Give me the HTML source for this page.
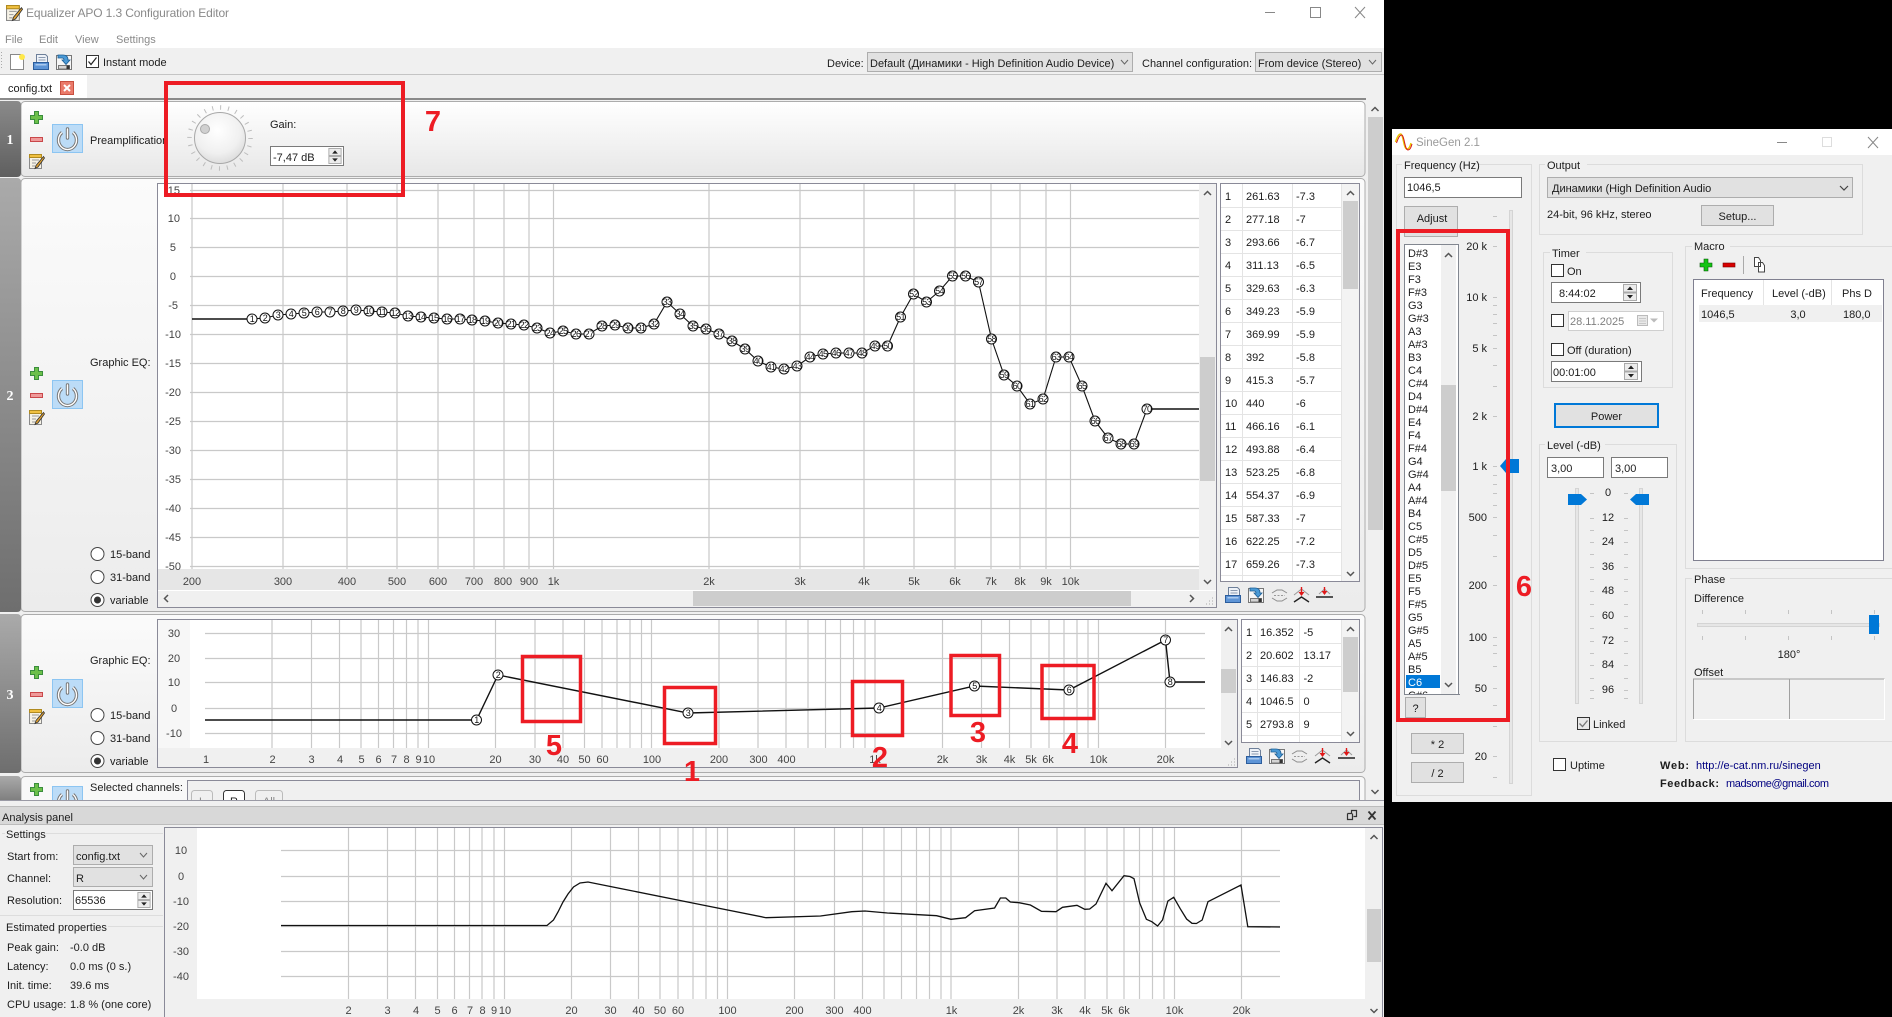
<!DOCTYPE html>
<html><head><meta charset="utf-8"><title>Equalizer APO</title>
<style>
html,body{margin:0;padding:0;background:#000;width:1892px;height:1017px;overflow:hidden}
svg{display:block}
text{font-family:"Liberation Sans","Noto Sans CJK JP",sans-serif;font-size:11px;fill:#1c1c1c}
.m{text-anchor:middle}.e{text-anchor:end}
.gy text{fill:#444}
.ch{fill:none;stroke:#555;stroke-width:1.5}
.th{fill:none;stroke:#666;stroke-width:1}
.grid{fill:none;stroke:#c9c9c9;stroke-width:1.2}
.curve{fill:none;stroke:#111;stroke-width:1.1}
.pt circle{fill:#fff;stroke:#111;stroke-width:1}
.pt text{font-size:9px;text-anchor:middle;letter-spacing:-.6px;fill:#111}
.rb{fill:none;stroke:#ed1c24;stroke-width:4}
.rn{font-size:29px;font-weight:bold;fill:#ed1c24;text-anchor:middle}
.sg{fill:none;stroke:#dcdcdc;stroke-width:1}
.ln{stroke:#e2e2e2;stroke-width:1}
.tk{stroke:#c4c4c4;stroke-width:1}
.btn{fill:#e1e1e1;stroke:#adadad}
.inp{fill:#fff;stroke:#7a7a7a}
.cb{fill:#fff;stroke:#333}
</style></head><body>
<svg width="1892" height="1017" viewBox="0 0 1892 1017" xmlns="http://www.w3.org/2000/svg">
<defs>
<linearGradient id="pg" x1="0" y1="0" x2="0" y2="1"><stop offset="0" stop-color="#fff"/><stop offset="1" stop-color="#e7e7e7"/></linearGradient>
<linearGradient id="pg2" x1="0" y1="0" x2="0" y2="1"><stop offset="0" stop-color="#fbfbfb"/><stop offset="1" stop-color="#ececec"/></linearGradient>
<linearGradient id="h1" x1="0" y1="0" x2="0" y2="1"><stop offset="0" stop-color="#8a8a8a"/><stop offset="1" stop-color="#5f5f5f"/></linearGradient>
<linearGradient id="h2" x1="0" y1="0" x2="0" y2="1"><stop offset="0" stop-color="#aaa"/><stop offset="1" stop-color="#6e6e6e"/></linearGradient>
<radialGradient id="kn" cx=".45" cy=".35" r=".75"><stop offset="0" stop-color="#fff"/><stop offset=".6" stop-color="#f0f0f0"/><stop offset="1" stop-color="#d4d4d4"/></radialGradient>
<symbol id="plus" viewBox="0 0 13 13" overflow="visible"><path d="M4.5.5h4v4h4v4h-4v4h-4v-4h-4v-4h4z" fill="#6cc04a" stroke="#3a8d3d"/></symbol>
<symbol id="minus" viewBox="0 0 13 5" overflow="visible"><rect x=".5" y=".5" width="12" height="4" fill="#ef9a9a" stroke="#c9474a"/></symbol>
<symbol id="edit" viewBox="0 0 15 15" overflow="visible"><rect x=".5" y="1.5" width="12" height="13" fill="#f6f2e6" stroke="#8a8a8a"/><rect x=".5" y=".5" width="12" height="3" fill="#f0c040" stroke="#b08a20"/><path d="M3 6h7M3 9h4M3 12h3" stroke="#999"/><path d="M14.5 2.5L7 11.5l-1 3 3-1.500L15.500 4z" fill="#e0a030" stroke="#333" stroke-width=".8"/></symbol>
<symbol id="pow" viewBox="0 0 31 29" overflow="visible"><rect x=".5" y=".5" width="30" height="28" fill="#bcdcf7" stroke="#8cc5f2"/><path d="M10 8.500A9 9.500 0 1 0 21 8.500" fill="none" stroke="#777" stroke-width="3.400"/><path d="M10 8.500A9 9.500 0 1 0 21 8.500" fill="none" stroke="#fff" stroke-width="1.400"/><path d="M15.500 5v9" stroke="#777" stroke-width="3.400" stroke-linecap="round"/><path d="M15.500 5v9" stroke="#fff" stroke-width="1.400" stroke-linecap="round"/></symbol>
<symbol id="save" viewBox="0 0 16 16" overflow="visible"><path d="M3.500.5h9l2 2v7h-11z" fill="#eef2f8" stroke="#6d7f99"/><path d="M5.500 3.500h7M5.500 6h7" stroke="#8b9ab0"/><rect x=".5" y="8.500" width="15" height="7" fill="#5d94d6" stroke="#2c5d9c"/><rect x="2.500" y="10" width="11" height="1.500" fill="#a9c9ee"/></symbol>
<symbol id="load" viewBox="0 0 16 16" overflow="visible"><rect x=".5" y="1.500" width="15" height="14" fill="#f6f6f6" stroke="#777"/><rect x="2.500" y="11.500" width="11" height="3.500" fill="#d4d4d4" stroke="#777"/><rect x="10.500" y="11.500" width="3" height="3.500" fill="#333"/><path d="M2 1h5q5 0 5 5h2l-4 4.500-4-4.500h2q0-2-2-2H2z" fill="#4a9ad6" stroke="#1d5d93" stroke-width=".8"/></symbol>
<symbol id="i3" viewBox="0 0 17 13" overflow="visible"><path d="M1 4L6 1h5l5 3M1 9l5 3h5l5-3" fill="none" stroke="#8d8d8d"/><path d="M3 6.500h11" stroke="#999" stroke-dasharray="2 1.500"/></symbol>
<symbol id="i4" viewBox="0 0 17 16" overflow="visible"><path d="M1 8L8.500 2 16 8" fill="none" stroke="#9a9a9a" stroke-width="1"/><path d="M1 15l7.500-5 7.500 5" fill="none" stroke="#222" stroke-width="1.400"/><path d="M8.500 0v8" stroke="#e01818" stroke-width="1.400"/><path d="M5.500 5h6l-3 4z" fill="#e01818"/></symbol>
<symbol id="i5" viewBox="0 0 17 14" overflow="visible"><path d="M3 7l5.500-5L14 7" fill="none" stroke="#9a9a9a"/><path d="M0 10h17" stroke="#222" stroke-width="1.400"/><path d="M8.500 0v7" stroke="#e01818" stroke-width="1.400"/><path d="M5.500 4h6l-3 4z" fill="#e01818"/></symbol>
<symbol id="spin" viewBox="0 0 14 17" overflow="visible"><rect x=".5" y=".5" width="13" height="7.500" fill="#ececec" stroke="#aaa"/><rect x=".5" y="9" width="13" height="7.500" fill="#ececec" stroke="#aaa"/><path d="M4 6l3-3.500L10 6zM4 11l3 3.500L10 11z" fill="#222"/></symbol>
</defs>

<rect width="1892" height="1017" fill="#000"/>
<!-- ===== MAIN WINDOW ===== -->
<rect x="0" y="0" width="1384" height="1017" fill="#f0f0f0"/>
<rect x="0" y="0" width="1384" height="48" fill="#fff"/>
<use href="#edit" x="6" y="5" width="16" height="16"/>
<text x="26" y="17" style="font-size:12px;fill:#8a8a8a" textLength="203">Equalizer APO 1.3 Configuration Editor</text>
<g style="fill:none"><text x="5" y="43" style="fill:#8a8a8a">File</text><text x="39" y="43" style="fill:#8a8a8a">Edit</text><text x="75" y="43" style="fill:#8a8a8a">View</text><text x="116" y="43" style="fill:#8a8a8a">Settings</text></g>
<path d="M1265 12.500h10" stroke="#888"/><rect x="1310.500" y="7.500" width="10" height="10" fill="none" stroke="#888"/><path d="M1355 7l10 11M1365 7l-10 11" stroke="#888"/>
<!-- toolbar -->
<path d="M0 74.500h1384" stroke="#c4c4c4"/>
<path d="M1.500 52v18" stroke="#aaa" stroke-dasharray="1 2"/>
<path d="M10.500 54.500h10l3 3v12h-13z" fill="#fff" stroke="#888"/><circle cx="22" cy="57" r="3" fill="#ffe84a"/>
<use href="#save" x="33" y="54" width="16" height="16"/>
<use href="#load" x="56" y="54" width="16" height="16"/>
<rect x="86.500" y="55.500" width="12" height="12" fill="#fff" stroke="#333"/><path d="M88.500 61.500l2.500 3 5.500-7" fill="none" stroke="#222" stroke-width="1.200"/>
<text x="103" y="66">Instant mode</text>
<text x="827" y="67">Device:</text>
<rect x="867.500" y="52.500" width="265" height="19" fill="#e1e1e1" stroke="#adadad"/>
<text x="870" y="67">Default (Динамики - High Definition Audio Device)</text>
<path class="th" d="M1121 60l3.500 4 3.500-4"/>
<text x="1142" y="67">Channel configuration:</text>
<rect x="1255.500" y="52.500" width="126" height="19" fill="#e1e1e1" stroke="#adadad"/>
<text x="1258" y="67">From device (Stereo)</text>
<path class="th" d="M1369 60l3.500 4 3.500-4"/>
<!-- tabs -->
<rect x="0" y="75" width="87" height="24" fill="#fff"/>
<text x="8" y="92">config.txt</text>
<rect x="60.500" y="81.500" width="13" height="13" fill="#ea7a6a" stroke="#c85040"/><path d="M64 85l6 6M70 85l-6 6" stroke="#fff" stroke-width="2"/>
<rect x="0" y="98" width="1366" height="2" fill="#8a8a8a"/>

<!-- main scrollbar -->
<rect x="1367" y="100" width="17" height="700" fill="#f0f0f0"/>
<rect x="1368" y="117" width="15" height="413" fill="#cdcdcd"/>
<path class="ch" d="M1371.500 111l3.500-3.500 3.500 3.500M1371.500 790l3.500 3.500 3.500-3.500"/>

<!-- Panel 1 -->
<rect x="21" y="101.500" width="1344" height="75" rx="4" fill="url(#pg)" stroke="#acacac"/>
<path d="M0 101h17q4 0 4 4v68q0 4-4 4H0z" fill="url(#h1)"/>
<text x="10" y="144" class="m" style="font-family:'Liberation Serif',serif;font-weight:bold;font-size:14px;fill:#fff">1</text>
<use href="#plus" x="30" y="111" width="13" height="13"/>
<use href="#minus" x="30" y="137" width="13" height="5"/>
<use href="#edit" x="29" y="154" width="15" height="15"/>
<use href="#pow" x="52" y="124" width="31" height="29"/>
<text x="90" y="144">Preamplification</text>
<circle cx="220" cy="138" r="30.500" fill="none" stroke="#bdbdbd" stroke-width="4.500" stroke-dasharray="1 6.980"/>
<circle cx="220" cy="138" r="25.500" fill="url(#kn)" stroke="#a8a8a8"/>
<circle cx="205" cy="129" r="4.500" fill="#d0d0d0" stroke="#aaa"/>
<text x="270" y="128">Gain:</text>
<rect x="270.500" y="146.500" width="73" height="19" fill="#fff" stroke="#7a7a7a"/>
<text x="273" y="161">-7,47 dB</text>
<use href="#spin" x="328" y="148" width="14" height="16"/>

<!-- Panel 2 -->
<rect x="21" y="178.500" width="1344" height="433" rx="4" fill="url(#pg2)" stroke="#acacac"/>
<path d="M0 178h17q4 0 4 4v426q0 4-4 4H0z" fill="url(#h2)"/>
<text x="10" y="400" class="m" style="font-family:'Liberation Serif',serif;font-weight:bold;font-size:14px;fill:#fff">2</text>
<use href="#plus" x="30" y="367" width="13" height="13"/>
<use href="#minus" x="30" y="393" width="13" height="5"/>
<use href="#edit" x="29" y="410" width="15" height="15"/>
<use href="#pow" x="52" y="380" width="31" height="29"/>
<text x="90" y="366">Graphic EQ:</text>
<circle cx="97.500" cy="554" r="6.500" fill="#fff" stroke="#444"/><text x="110" y="558">15-band</text>
<circle cx="97.500" cy="577" r="6.500" fill="#fff" stroke="#444"/><text x="110" y="581">31-band</text>
<circle cx="97.500" cy="600" r="6.500" fill="#fff" stroke="#444"/><circle cx="97.500" cy="600" r="3.500" fill="#333"/><text x="110" y="604">variable</text>
<!-- graph box 2 -->
<rect x="157.500" y="183.500" width="1059" height="424" fill="#fff" stroke="#8a8a98"/>
<rect x="158" y="569" width="1041" height="21" fill="#e6e6e6"/>
<path class="grid" d="M190 190.500H1199M190 218.500H1199M190 247.500H1199M190 276.500H1199M190 305.500H1199M190 334.500H1199M190 363.500H1199M190 392.500H1199M190 421.500H1199M190 450.500H1199M190 479.500H1199M190 508.500H1199M190 537.500H1199M190 566.500H1199"/>
<path class="grid" d="M192 184V569M283 184V569M347 184V569M397 184V569M438 184V569M474 184V569M504 184V569M529 184V569M553.500 184V569M709 184V569M800 184V569M864 184V569M914 184V569M955 184V569M991 184V569M1020 184V569M1046 184V569M1070.500 184V569"/>
<g class="gy">
<text x="180" y="194" class="e">15</text><text x="180" y="222" class="e">10</text><text x="176" y="251" class="e">5</text><text x="176" y="280" class="e">0</text><text x="178" y="309" class="e">-5</text><text x="181" y="338" class="e">-10</text><text x="181" y="367" class="e">-15</text><text x="181" y="396" class="e">-20</text><text x="181" y="425" class="e">-25</text><text x="181" y="454" class="e">-30</text><text x="181" y="483" class="e">-35</text><text x="181" y="512" class="e">-40</text><text x="181" y="541" class="e">-45</text><text x="181" y="570" class="e">-50</text>
<text x="192" y="585" class="m">200</text><text x="283" y="585" class="m">300</text><text x="347" y="585" class="m">400</text><text x="397" y="585" class="m">500</text><text x="438" y="585" class="m">600</text><text x="474" y="585" class="m">700</text><text x="503" y="585" class="m">800</text><text x="529" y="585" class="m">900</text><text x="553.500" y="585" class="m">1k</text><text x="709" y="585" class="m">2k</text><text x="800" y="585" class="m">3k</text><text x="864" y="585" class="m">4k</text><text x="914" y="585" class="m">5k</text><text x="955" y="585" class="m">6k</text><text x="991" y="585" class="m">7k</text><text x="1020" y="585" class="m">8k</text><text x="1046" y="585" class="m">9k</text><text x="1070.500" y="585" class="m">10k</text>
</g>
<polyline class="curve" points="192,319 252,319 265,318 278,315 291,314 304,313 317,312 330,312 343,311 356,310 369,311 382,312 395,313 408,316 421,317 434,318 447,319 460,319 472,320 485,321 498,323 511,324 524,325 537,328 550,333 563,331 576,334 589,334 602,326 615,325 628,328 641,328 654,324 667,302 680,314 693,326 706,329 719,334 732,341 745,349 758,361 771,367 784,369 797,366 810,357 823,354 836,353 849,353 862,353 875,346 887.500,346 900.500,317 913.500,294 926.500,302 939.500,291 952.500,276 965.500,276 978.500,282 991.500,339 1004,375 1017,386 1030,404 1043,399 1056,357 1069,357 1082,386 1095,421 1108,438 1121,444 1134,444 1147,409 1199,409"/>
<path d="M192 319H252M1147 409H1199" stroke="#111" stroke-width="1.500"/>
<g class="pt">
<circle cx="252" cy="319" r="5"/><text x="252" y="322">1</text><circle cx="265" cy="318" r="5"/><text x="265" y="321">2</text><circle cx="278" cy="315" r="5"/><text x="278" y="318">3</text><circle cx="291" cy="314" r="5"/><text x="291" y="317">4</text><circle cx="304" cy="313" r="5"/><text x="304" y="316">5</text><circle cx="317" cy="312" r="5"/><text x="317" y="315">6</text><circle cx="330" cy="312" r="5"/><text x="330" y="315">7</text><circle cx="343" cy="311" r="5"/><text x="343" y="314">8</text><circle cx="356" cy="310" r="5"/><text x="356" y="313">9</text><circle cx="369" cy="311" r="5"/><text x="369" y="314">10</text>
<circle cx="382" cy="312" r="5"/><text x="382" y="315">11</text><circle cx="395" cy="313" r="5"/><text x="395" y="316">12</text><circle cx="408" cy="316" r="5"/><text x="408" y="319">13</text><circle cx="421" cy="317" r="5"/><text x="421" y="320">14</text><circle cx="434" cy="318" r="5"/><text x="434" y="321">15</text><circle cx="447" cy="319" r="5"/><text x="447" y="322">16</text><circle cx="460" cy="319" r="5"/><text x="460" y="322">17</text><circle cx="472" cy="320" r="5"/><text x="472" y="323">18</text><circle cx="485" cy="321" r="5"/><text x="485" y="324">19</text><circle cx="498" cy="323" r="5"/><text x="498" y="326">20</text>
<circle cx="511" cy="324" r="5"/><text x="511" y="327">21</text><circle cx="524" cy="325" r="5"/><text x="524" y="328">22</text><circle cx="537" cy="328" r="5"/><text x="537" y="331">23</text><circle cx="550" cy="333" r="5"/><text x="550" y="336">24</text><circle cx="563" cy="331" r="5"/><text x="563" y="334">25</text><circle cx="576" cy="334" r="5"/><text x="576" y="337">26</text><circle cx="589" cy="334" r="5"/><text x="589" y="337">27</text><circle cx="602" cy="326" r="5"/><text x="602" y="329">28</text><circle cx="615" cy="325" r="5"/><text x="615" y="328">29</text><circle cx="628" cy="328" r="5"/><text x="628" y="331">30</text>
<circle cx="641" cy="328" r="5"/><text x="641" y="331">31</text><circle cx="654" cy="324" r="5"/><text x="654" y="327">32</text><circle cx="667" cy="302" r="5"/><text x="667" y="305">33</text><circle cx="680" cy="314" r="5"/><text x="680" y="317">34</text><circle cx="693" cy="326" r="5"/><text x="693" y="329">35</text><circle cx="706" cy="329" r="5"/><text x="706" y="332">36</text><circle cx="719" cy="334" r="5"/><text x="719" y="337">37</text><circle cx="732" cy="341" r="5"/><text x="732" y="344">38</text><circle cx="745" cy="349" r="5"/><text x="745" y="352">39</text><circle cx="758" cy="361" r="5"/><text x="758" y="364">40</text>
<circle cx="771" cy="367" r="5"/><text x="771" y="370">41</text><circle cx="784" cy="369" r="5"/><text x="784" y="372">42</text><circle cx="797" cy="366" r="5"/><text x="797" y="369">43</text><circle cx="810" cy="357" r="5"/><text x="810" y="360">44</text><circle cx="823" cy="354" r="5"/><text x="823" y="357">45</text><circle cx="836" cy="353" r="5"/><text x="836" y="356">46</text><circle cx="849" cy="353" r="5"/><text x="849" y="356">47</text><circle cx="862" cy="353" r="5"/><text x="862" y="356">48</text><circle cx="875" cy="346" r="5"/><text x="875" y="349">49</text><circle cx="887.500" cy="346" r="5"/><text x="887.500" y="349">50</text>
<circle cx="900.500" cy="317" r="5"/><text x="900.500" y="320">51</text><circle cx="913.500" cy="294" r="5"/><text x="913.500" y="297">52</text><circle cx="926.500" cy="302" r="5"/><text x="926.500" y="305">53</text><circle cx="939.500" cy="291" r="5"/><text x="939.500" y="294">54</text><circle cx="952.500" cy="276" r="5"/><text x="952.500" y="279">55</text><circle cx="965.500" cy="276" r="5"/><text x="965.500" y="279">56</text><circle cx="978.500" cy="282" r="5"/><text x="978.500" y="285">57</text><circle cx="991.500" cy="339" r="5"/><text x="991.500" y="342">58</text><circle cx="1004" cy="375" r="5"/><text x="1004" y="378">59</text><circle cx="1017" cy="386" r="5"/><text x="1017" y="389">60</text>
<circle cx="1030" cy="404" r="5"/><text x="1030" y="407">61</text><circle cx="1043" cy="399" r="5"/><text x="1043" y="402">62</text><circle cx="1056" cy="357" r="5"/><text x="1056" y="360">63</text><circle cx="1069" cy="357" r="5"/><text x="1069" y="360">64</text><circle cx="1082" cy="386" r="5"/><text x="1082" y="389">65</text><circle cx="1095" cy="421" r="5"/><text x="1095" y="424">66</text><circle cx="1108" cy="438" r="5"/><text x="1108" y="441">67</text><circle cx="1121" cy="444" r="5"/><text x="1121" y="447">68</text><circle cx="1134" cy="444" r="5"/><text x="1134" y="447">69</text><circle cx="1147" cy="409" r="5"/><text x="1147" y="412">70</text>
</g>
<!-- scrollbars graph 2 -->
<rect x="1199" y="184" width="17" height="406" fill="#f0f0f0"/>
<rect x="1200" y="357" width="15" height="124" fill="#cdcdcd"/>
<path class="ch" d="M1204 195l3.500-3.500 3.500 3.500M1204 580l3.500 3.500 3.500-3.500"/>
<rect x="158" y="591" width="1058" height="16" fill="#f0f0f0"/>
<rect x="693" y="591" width="438" height="15" fill="#cdcdcd"/>
<path class="ch" d="M168 595l-3.500 3.500 3.500 3.500M1190 595l3.500 3.500-3.500 3.500"/>
<path d="M1212 604h1M1209 604h1M1206 604h1M1212 601h1M1209 601h1M1212 598h1" stroke="#aaa"/>
<!-- table 2 -->
<rect x="1220.500" y="183.500" width="139" height="398" fill="#fff" stroke="#8a8a98"/>
<path d="M1242.500 184V581M1292.500 184V581M1341.500 184V581" stroke="#e4e4e4"/>
<path d="M1221 207.500h120M1221 230.500h120M1221 253.500h120M1221 276.500h120M1221 299.500h120M1221 322.500h120M1221 345.500h120M1221 368.500h120M1221 391.500h120M1221 414.500h120M1221 437.500h120M1221 460.500h120M1221 483.500h120M1221 506.500h120M1221 529.500h120M1221 552.500h120M1221 575.500h120" stroke="#e4e4e4"/>
<rect x="1342" y="184" width="17" height="397" fill="#f3f3f3"/>
<rect x="1343" y="201" width="15" height="88" fill="#cdcdcd"/>
<path class="ch" d="M1347 195l3.500-3.500 3.500 3.500M1347 572l3.500 3.500 3.500-3.500"/>
<g>
<text x="1225" y="200">1</text><text x="1246" y="200">261.63</text><text x="1296" y="200">-7.3</text>
<text x="1225" y="223">2</text><text x="1246" y="223">277.18</text><text x="1296" y="223">-7</text>
<text x="1225" y="246">3</text><text x="1246" y="246">293.66</text><text x="1296" y="246">-6.7</text>
<text x="1225" y="269">4</text><text x="1246" y="269">311.13</text><text x="1296" y="269">-6.5</text>
<text x="1225" y="292">5</text><text x="1246" y="292">329.63</text><text x="1296" y="292">-6.3</text>
<text x="1225" y="315">6</text><text x="1246" y="315">349.23</text><text x="1296" y="315">-5.9</text>
<text x="1225" y="338">7</text><text x="1246" y="338">369.99</text><text x="1296" y="338">-5.9</text>
<text x="1225" y="361">8</text><text x="1246" y="361">392</text><text x="1296" y="361">-5.8</text>
<text x="1225" y="384">9</text><text x="1246" y="384">415.3</text><text x="1296" y="384">-5.7</text>
<text x="1225" y="407">10</text><text x="1246" y="407">440</text><text x="1296" y="407">-6</text>
<text x="1225" y="430">11</text><text x="1246" y="430">466.16</text><text x="1296" y="430">-6.1</text>
<text x="1225" y="453">12</text><text x="1246" y="453">493.88</text><text x="1296" y="453">-6.4</text>
<text x="1225" y="476">13</text><text x="1246" y="476">523.25</text><text x="1296" y="476">-6.8</text>
<text x="1225" y="499">14</text><text x="1246" y="499">554.37</text><text x="1296" y="499">-6.9</text>
<text x="1225" y="522">15</text><text x="1246" y="522">587.33</text><text x="1296" y="522">-7</text>
<text x="1225" y="545">16</text><text x="1246" y="545">622.25</text><text x="1296" y="545">-7.2</text>
<text x="1225" y="568">17</text><text x="1246" y="568">659.26</text><text x="1296" y="568">-7.3</text>
</g>
<use href="#save" x="1225" y="587" width="16" height="16"/><use href="#load" x="1248" y="587" width="16" height="16"/><use href="#i3" x="1271" y="589" width="17" height="13"/><use href="#i4" x="1293" y="587" width="17" height="16"/><use href="#i5" x="1316" y="587" width="17" height="14"/>

<!-- Panel 3 -->
<rect x="21" y="614.500" width="1344" height="158" rx="4" fill="url(#pg2)" stroke="#acacac"/>
<path d="M0 614h17q4 0 4 4v151q0 4-4 4H0z" fill="url(#h2)"/>
<text x="10" y="699" class="m" style="font-family:'Liberation Serif',serif;font-weight:bold;font-size:14px;fill:#fff">3</text>
<use href="#plus" x="30" y="666" width="13" height="13"/>
<use href="#minus" x="30" y="692" width="13" height="5"/>
<use href="#edit" x="29" y="709" width="15" height="15"/>
<use href="#pow" x="52" y="679" width="31" height="29"/>
<text x="90" y="664">Graphic EQ:</text>
<circle cx="97.500" cy="715" r="6.500" fill="#fff" stroke="#444"/><text x="110" y="719">15-band</text>
<circle cx="97.500" cy="738" r="6.500" fill="#fff" stroke="#444"/><text x="110" y="742">31-band</text>
<circle cx="97.500" cy="761" r="6.500" fill="#fff" stroke="#444"/><circle cx="97.500" cy="761" r="3.500" fill="#333"/><text x="110" y="765">variable</text>
<rect x="157.500" y="619.500" width="1080" height="148" fill="#f0f0f0" stroke="#8a8a98"/>
<rect x="190" y="620" width="1031" height="128" fill="#fff"/>
<rect x="158" y="620" width="32" height="128" fill="#f7f7f7"/>
<path class="grid" d="M205 633.500H1205M205 658.500H1205M205 682.500H1205M205 708.500H1205M205 733.500H1205"/>
<path class="grid" d="M272 620V748M311.500 620V748M339.500 620V748M361 620V748M378.500 620V748M393.500 620V748M406.500 620V748M418 620V748M428.500 620V748M495.500 620V748M535 620V748M563 620V748M584.500 620V748M602 620V748M617 620V748M630 620V748M641.500 620V748M651.500 620V748M719 620V748M758 620V748M786 620V748M808 620V748M825.500 620V748M840.500 620V748M853.500 620V748M865 620V748M875 620V748M942.500 620V748M981.500 620V748M1009.500 620V748M1031 620V748M1049 620V748M1064 620V748M1077 620V748M1088 620V748M1098.500 620V748M1165.500 620V748"/>
<g class="gy">
<text x="174" y="637" class="m">30</text><text x="174" y="662" class="m">20</text><text x="174" y="686" class="m">10</text><text x="174" y="712" class="m">0</text><text x="174" y="737" class="m">-10</text>
<text x="206" y="763" class="m">1</text><text x="272.500" y="763" class="m">2</text><text x="311.500" y="763" class="m">3</text><text x="340" y="763" class="m">4</text><text x="361.500" y="763" class="m">5</text><text x="378.500" y="763" class="m">6</text><text x="394" y="763" class="m">7</text><text x="406.500" y="763" class="m">8</text><text x="418.500" y="763" class="m">9</text><text x="429" y="763" class="m">10</text><text x="495.500" y="763" class="m">20</text><text x="535" y="763" class="m">30</text><text x="563" y="763" class="m">40</text><text x="584.500" y="763" class="m">50</text><text x="602.500" y="763" class="m">60</text><text x="652" y="763" class="m">100</text><text x="719" y="763" class="m">200</text><text x="758.500" y="763" class="m">300</text><text x="786.500" y="763" class="m">400</text><text x="875" y="763" class="m">1k</text><text x="942.500" y="763" class="m">2k</text><text x="981.500" y="763" class="m">3k</text><text x="1009.500" y="763" class="m">4k</text><text x="1031" y="763" class="m">5k</text><text x="1048" y="763" class="m">6k</text><text x="1098.500" y="763" class="m">10k</text><text x="1165.500" y="763" class="m">20k</text>
</g>
<polyline class="curve" style="stroke-width:1.400" points="205,720 476.500,720 498,675 688,713 879,708 974.500,686 1069,690 1165.500,640 1170,682 1205,682"/>
<g class="pt"><circle cx="476.500" cy="720" r="5"/><text x="476.500" y="723">1</text><circle cx="498" cy="675" r="5"/><text x="498" y="678">2</text><circle cx="688" cy="713" r="5"/><text x="688" y="716">3</text><circle cx="879" cy="708" r="5"/><text x="879" y="711">4</text><circle cx="974.500" cy="686" r="5"/><text x="974.500" y="689">5</text><circle cx="1069" cy="690" r="5"/><text x="1069" y="693">6</text><circle cx="1165.500" cy="640" r="5"/><text x="1165.500" y="643">7</text><circle cx="1170" cy="682" r="5"/><text x="1170" y="685">8</text></g>
<rect x="1221" y="620" width="16" height="131" fill="#f0f0f0"/>
<rect x="1221" y="669" width="15" height="24" fill="#cdcdcd"/>
<path class="ch" d="M1225 631l3.500-3.500 3.500 3.500M1225 741l3.500 3.500 3.500-3.500"/>
<path d="M1234 765h1M1231 765h1M1228 765h1M1234 762h1M1231 762h1M1234 759h1" stroke="#aaa"/>
<rect x="1241.500" y="619.500" width="118" height="123" fill="#fff" stroke="#8a8a98"/>
<path d="M1257.500 620V742M1299.500 620V742M1341.500 620V742M1242 643.500h99M1242 666.500h99M1242 689.500h99M1242 712.500h99M1242 735.500h99" stroke="#e4e4e4"/>
<rect x="1342" y="620" width="17" height="122" fill="#f3f3f3"/>
<rect x="1343" y="637" width="15" height="55" fill="#cdcdcd"/>
<path class="ch" d="M1347 631l3.500-3.500 3.500 3.500M1347 732l3.500 3.500 3.500-3.500"/>
<text x="1246" y="636">1</text><text x="1260" y="636">16.352</text><text x="1303.500" y="636">-5</text>
<text x="1246" y="659">2</text><text x="1260" y="659">20.602</text><text x="1303.500" y="659">13.17</text>
<text x="1246" y="682">3</text><text x="1260" y="682">146.83</text><text x="1303.500" y="682">-2</text>
<text x="1246" y="705">4</text><text x="1260" y="705">1046.5</text><text x="1303.500" y="705">0</text>
<text x="1246" y="728">5</text><text x="1260" y="728">2793.8</text><text x="1303.500" y="728">9</text>
<use href="#save" x="1246" y="748" width="16" height="16"/><use href="#load" x="1269" y="748" width="16" height="16"/><use href="#i3" x="1291" y="750" width="17" height="13"/><use href="#i4" x="1314" y="748" width="17" height="16"/><use href="#i5" x="1338" y="748" width="17" height="14"/>

<!-- Panel 4 (clipped) -->
<rect x="21" y="776.500" width="1344" height="40" rx="4" fill="#f8f8f8" stroke="#acacac"/>
<path d="M0 776h17q4 0 4 4v30H0z" fill="url(#h2)"/>
<use href="#plus" x="30" y="783" width="13" height="13"/>
<use href="#pow" x="52" y="786" width="31" height="29"/>
<text x="90" y="791">Selected channels:</text>
<rect x="187.500" y="780.500" width="1172" height="40" fill="#f0f0f0" stroke="#8a8a98"/>
<rect x="191.500" y="790.500" width="21" height="24" rx="3" fill="#f0f0f0" stroke="#bbb"/><text x="202" y="805" class="m" style="fill:#888">L</text>
<rect x="223.500" y="790.500" width="21" height="24" rx="3" fill="#fff" stroke="#333"/><text x="234" y="805" class="m">R</text>
<rect x="255.500" y="790.500" width="27" height="24" rx="3" fill="#f0f0f0" stroke="#bbb"/><text x="269" y="805" class="m" style="fill:#888">All</text>

<!-- analysis dock -->
<rect x="0" y="800" width="1384" height="217" fill="#f0f0f0"/>
<path d="M0 800.500h1384" stroke="#9a9aa5"/>
<rect x="0" y="806" width="1384" height="18" fill="#d8d8d8"/>
<path d="M0 806.500h1384M0 824.500h1384" stroke="#bcbcbc"/>
<text x="2" y="821">Analysis panel</text>
<path d="M1347.500 813.500h4v-3h5v6h-3M1347.500 813.500v6h5v-6" fill="none" stroke="#333" stroke-width="1.200"/>
<path d="M1368.500 811.500l7 8M1375.500 811.500l-7 8" stroke="#333" stroke-width="1.800"/>
<path d="M2 833.500h3M46 833.500h117M163 833.500" stroke="#ddd"/>
<text x="6" y="838">Settings</text>
<text x="7" y="860">Start from:</text>
<rect x="73.500" y="845.500" width="79" height="19" fill="#e1e1e1" stroke="#adadad"/><text x="76" y="860">config.txt</text><path class="th" d="M140 853l3.500 4 3.500-4"/>
<text x="7" y="882">Channel:</text>
<rect x="73.500" y="867.500" width="79" height="19" fill="#e1e1e1" stroke="#adadad"/><text x="76" y="882">R</text><path class="th" d="M140 875l3.500 4 3.500-4"/>
<text x="7" y="904">Resolution:</text>
<rect x="73.500" y="890.500" width="79" height="19" fill="#fff" stroke="#7a7a7a"/><text x="75" y="904">65536</text><use href="#spin" x="137" y="892" width="14" height="16"/>
<path d="M0 915.500h163M108 926.500h55" stroke="#ddd"/>
<text x="6" y="931">Estimated properties</text>
<text x="7" y="951">Peak gain:</text><text x="70" y="951">-0.0 dB</text>
<text x="7" y="970">Latency:</text><text x="70" y="970">0.0 ms (0 s.)</text>
<text x="7" y="989">Init. time:</text><text x="70" y="989">39.6 ms</text>
<text x="7" y="1008">CPU usage:</text><text x="70" y="1008">1.8 % (one core)</text>
<rect x="164.500" y="827.500" width="1218" height="195" fill="#f0f0f0" stroke="#8a8a98"/>
<rect x="197" y="828" width="1168" height="171" fill="#fff"/>
<path class="grid" d="M281 850.500H1280M281 876.500H1280M281 901.500H1280M281 926.500H1280M281 951.500H1280M281 976.500H1280"/>
<path class="grid" d="M348.500 828V999M387.500 828V999M415.500 828V999M437.500 828V999M454.500 828V999M469.500 828V999M482 828V999M494 828V999M504.500 828V999M571.500 828V999M610.500 828V999M638.500 828V999M660 828V999M678 828V999M693 828V999M706 828V999M717.500 828V999M727.500 828V999M794.500 828V999M834.500 828V999M862.500 828V999M884 828V999M901.500 828V999M916.500 828V999M929.500 828V999M941 828V999M951 828V999M1018.500 828V999M1057 828V999M1085 828V999M1107 828V999M1124 828V999M1139.500 828V999M1152.500 828V999M1164 828V999M1174.500 828V999M1241.500 828V999"/>
<g class="gy">
<text x="181" y="854" class="m">10</text><text x="181" y="880" class="m">0</text><text x="181" y="905" class="m">-10</text><text x="181" y="930" class="m">-20</text><text x="181" y="955" class="m">-30</text><text x="181" y="980" class="m">-40</text>
<text x="348.500" y="1014" class="m">2</text><text x="387.500" y="1014" class="m">3</text><text x="416" y="1014" class="m">4</text><text x="437.500" y="1014" class="m">5</text><text x="454.500" y="1014" class="m">6</text><text x="470" y="1014" class="m">7</text><text x="482.500" y="1014" class="m">8</text><text x="494" y="1014" class="m">9</text><text x="505" y="1014" class="m">10</text><text x="571.500" y="1014" class="m">20</text><text x="610.500" y="1014" class="m">30</text><text x="638.500" y="1014" class="m">40</text><text x="660" y="1014" class="m">50</text><text x="678" y="1014" class="m">60</text><text x="727.500" y="1014" class="m">100</text><text x="794.500" y="1014" class="m">200</text><text x="834.500" y="1014" class="m">300</text><text x="862.500" y="1014" class="m">400</text><text x="951.500" y="1014" class="m">1k</text><text x="1018.500" y="1014" class="m">2k</text><text x="1057" y="1014" class="m">3k</text><text x="1085" y="1014" class="m">4k</text><text x="1107" y="1014" class="m">5k</text><text x="1124" y="1014" class="m">6k</text><text x="1174.500" y="1014" class="m">10k</text><text x="1241.500" y="1014" class="m">20k</text>
</g>
<polyline class="curve" style="stroke-width:1.300" points="281,925.500 547,925.500 553.500,920 558,912 563,902 568,894 573.500,887 580,883 588,882 700,904.500 766,917.700 820.500,916 851.800,911.700 865,911 887.500,913 936.600,915.700 951,919.300 965.600,917.700 974.600,910.700 994.600,908 1000.400,898 1005.800,898 1010.300,902 1019,902.700 1030.400,905 1041.500,911.300 1056,911.700 1062.500,907.300 1077,905.300 1084.800,909.300 1089.700,909 1096,904 1106,883.300 1112,890.700 1124,875.700 1130,876.500 1134,878.700 1139.700,903 1146.400,919.300 1151.800,921.700 1157.600,926 1162.500,920 1167.900,901 1173.700,897.300 1180,908.300 1186.600,919 1192,923.300 1196.400,923.500 1202.200,920 1208,901.700 1241,885 1247.800,926.700 1280,927"/>
<rect x="1365" y="828" width="17" height="189" fill="#f0f0f0"/>
<rect x="1367" y="909" width="14" height="53" fill="#cdcdcd"/>
<path class="ch" d="M1370.500 839l3.500-3.500 3.500 3.500M1370.500 1009l3.500 3.500 3.500-3.500"/>

<!-- red annotations on main window -->
<rect class="rb" x="166" y="83" width="237" height="112"/>
<text x="433" y="131" class="rn">7</text>
<rect class="rb" x="522.500" y="656.500" width="58" height="65" style="stroke-width:3.500"/>
<rect class="rb" x="664.500" y="687.500" width="51" height="56" style="stroke-width:3.500"/>
<rect class="rb" x="852.500" y="681.500" width="50" height="54" style="stroke-width:3.500"/>
<rect class="rb" x="951" y="655.500" width="48.500" height="60" style="stroke-width:3.500"/>
<rect class="rb" x="1042" y="665.500" width="52" height="53" style="stroke-width:3.500"/>
<text x="554" y="755" class="rn">5</text>
<text x="692" y="781" class="rn">1</text>
<text x="880" y="767" class="rn">2</text>
<text x="978" y="742" class="rn">3</text>
<text x="1070" y="753" class="rn">4</text>

<!-- ===== SINEGEN ===== -->
<rect x="1392" y="129" width="500" height="673" fill="#f0f0f0"/>
<rect x="1392" y="129" width="500" height="26" fill="#fff"/>
<path d="M1395.500 142c2-6 3.500-8 5-8 3 0 3 15 6.500 15 1.500 0 3-2 4-6" fill="none" stroke="#e8c800" stroke-width="1.500"/>
<path d="M1396.500 143c2-6 3.500-8 5-8 3 0 3 15 6.500 15 1.500 0 3-2 4-6" fill="none" stroke="#d81818" stroke-width="1"/>
<text x="1416" y="146" style="fill:#9a9a9a;font-size:11.500px">SineGen 2.1</text>
<path d="M1777 142.500h10" stroke="#888"/><rect x="1822.500" y="137.500" width="9" height="9" fill="none" stroke="#ddd"/><path d="M1868 137l10 11M1878 137l-10 11" stroke="#888"/>
<!-- Frequency group -->
<rect class="sg" x="1396.500" y="164.500" width="135" height="631"/>
<rect x="1402" y="158" width="76" height="14" fill="#f0f0f0"/>
<text x="1404" y="169">Frequency (Hz)</text>
<rect class="inp" x="1404.500" y="177.500" width="117" height="20"/>
<text x="1407" y="191">1046,5</text>
<rect class="btn" x="1404.500" y="206.500" width="53" height="30"/>
<text x="1432" y="222" class="m">Adjust</text>
<rect x="1509.500" y="210.500" width="3" height="573" fill="#e6e6e6" stroke="#d4d4d4"/>
<path class="tk" d="M1493 216.500h4M1493 246.500h4M1493 297.500h4M1493 305.500h4M1493 314.500h4M1493 323.500h4M1493 335.500h4M1493 348.500h4M1493 365.500h4M1493 386.500h4M1493 416.500h4M1493 466.500h4M1493 475.500h4M1493 484.500h4M1493 493.500h4M1493 505.500h4M1493 517.500h4M1493 535.500h4M1493 556.500h4M1493 585.500h4M1493 637.500h4M1493 645.500h4M1493 653.500h4M1493 666.500h4M1493 688.500h4M1493 705.500h4M1493 726.500h4M1493 756.500h4M1493 777.500h4"/>
<g><text x="1487" y="250" class="e">20 k</text><text x="1487" y="301" class="e">10 k</text><text x="1487" y="352" class="e">5 k</text><text x="1487" y="420" class="e">2 k</text><text x="1487" y="470" class="e">1 k</text><text x="1487" y="521" class="e">500</text><text x="1487" y="589" class="e">200</text><text x="1487" y="641" class="e">100</text><text x="1487" y="692" class="e">50</text><text x="1487" y="760" class="e">20</text></g>
<path d="M1519 459h-13l-6 7 6 7h13z" fill="#0078d7"/>
<!-- note list -->
<rect x="1404.500" y="244.500" width="54" height="450" fill="#fff" stroke="#828790"/>
<rect x="1441" y="245" width="15" height="449" fill="#f0f0f0"/>
<rect x="1441" y="385" width="15" height="106" fill="#cdcdcd"/>
<path class="ch" d="M1445 257l3.500-3.500 3.500 3.500M1445 683l3.500 3.500 3.500-3.500"/>
<g>
<text x="1408" y="257">D#3</text><text x="1408" y="270">E3</text><text x="1408" y="283">F3</text><text x="1408" y="296">F#3</text><text x="1408" y="309">G3</text><text x="1408" y="322">G#3</text><text x="1408" y="335">A3</text><text x="1408" y="348">A#3</text><text x="1408" y="361">B3</text><text x="1408" y="374">C4</text><text x="1408" y="387">C#4</text><text x="1408" y="400">D4</text><text x="1408" y="413">D#4</text><text x="1408" y="426">E4</text><text x="1408" y="439">F4</text><text x="1408" y="452">F#4</text><text x="1408" y="465">G4</text><text x="1408" y="478">G#4</text><text x="1408" y="491">A4</text><text x="1408" y="504">A#4</text><text x="1408" y="517">B4</text><text x="1408" y="530">C5</text><text x="1408" y="543">C#5</text><text x="1408" y="556">D5</text><text x="1408" y="569">D#5</text><text x="1408" y="582">E5</text><text x="1408" y="595">F5</text><text x="1408" y="608">F#5</text><text x="1408" y="621">G5</text><text x="1408" y="634">G#5</text><text x="1408" y="647">A5</text><text x="1408" y="660">A#5</text><text x="1408" y="673">B5</text>
</g>
<rect x="1406" y="675" width="34" height="13" fill="#0078d7"/>
<text x="1408" y="686" style="fill:#fff">C6</text>
<text x="1408" y="699" style="clip-path:inset(0 0 6px 0)">C#6</text>
<rect x="1404" y="694" width="56" height="1" fill="#828790"/>
<rect x="1400" y="695" width="60" height="2" fill="#f0f0f0"/>
<rect class="btn" x="1405.500" y="697.500" width="20" height="20"/>
<text x="1415.500" y="712" class="m">?</text>
<rect class="btn" x="1411.500" y="733.500" width="52" height="20"/><text x="1437.500" y="748" class="m">* 2</text>
<rect class="btn" x="1411.500" y="762.500" width="52" height="20"/><text x="1437.500" y="777" class="m">/ 2</text>
<rect class="rb" x="1398" y="231" width="110" height="489"/>
<text x="1524" y="596" class="rn">6</text>
<!-- Output -->
<rect class="sg" x="1539.500" y="164.500" width="323" height="70"/>
<rect x="1545" y="158" width="42" height="14" fill="#f0f0f0"/>
<text x="1547" y="169">Output</text>
<rect class="btn" x="1547.500" y="177.500" width="305" height="20"/>
<text x="1552" y="192">Динамики (High Definition Audio</text>
<path d="M1840 186l4 4 4-4" fill="none" stroke="#444" stroke-width="1.200"/>
<text x="1547" y="218">24-bit, 96 kHz, stereo</text>
<rect class="btn" x="1701.500" y="205.500" width="72" height="20"/><text x="1737.500" y="220" class="m">Setup...</text>
<!-- Timer -->
<rect class="sg" x="1543.500" y="252.500" width="129" height="135"/>
<rect x="1550" y="246" width="36" height="14" fill="#f0f0f0"/>
<text x="1552" y="257">Timer</text>
<rect class="cb" x="1551.500" y="264.500" width="12" height="12"/><text x="1567" y="275">On</text>
<rect class="inp" x="1551.500" y="282.500" width="89" height="20"/><text x="1559" y="297">8:44:02</text><use href="#spin" x="1623" y="284" width="14" height="17"/>
<rect class="cb" x="1551.500" y="314.500" width="12" height="12"/>
<rect x="1568.500" y="311.500" width="95" height="19" fill="#fff" stroke="#cfcfcf"/><text x="1570" y="325" style="fill:#808080">28.11.2025</text>
<rect x="1637.500" y="315.500" width="10" height="10" fill="#e8e8e8" stroke="#bbb"/><path d="M1639 318.500h7M1639 321h7M1639 323.500h7" stroke="#c8c8c8"/><path d="M1650 318.500h8l-4 4z" fill="#bbb"/>
<rect class="cb" x="1551.500" y="343.500" width="12" height="12"/><text x="1567" y="354">Off (duration)</text>
<rect class="inp" x="1551.500" y="361.500" width="90" height="20"/><text x="1553" y="376">00:01:00</text><use href="#spin" x="1624" y="363" width="14" height="17"/>
<rect x="1555" y="404" width="103" height="23" fill="#e1e1e1" stroke="#0078d7" stroke-width="2"/>
<text x="1606.500" y="420" class="m">Power</text>
<!-- Level -->
<rect class="sg" x="1539.500" y="444.500" width="137" height="297"/>
<rect x="1545" y="438" width="60" height="14" fill="#f0f0f0"/>
<text x="1547" y="449">Level (-dB)</text>
<rect class="inp" x="1547.500" y="457.500" width="56" height="20"/><text x="1551" y="472">3,00</text>
<rect class="inp" x="1611.500" y="457.500" width="56" height="20"/><text x="1615" y="472">3,00</text>
<rect x="1575.500" y="488.500" width="3" height="215" fill="#e6e6e6" stroke="#d4d4d4"/>
<rect x="1639.500" y="488.500" width="3" height="215" fill="#e6e6e6" stroke="#d4d4d4"/>
<path d="M1568 494h13l6 5.500-6 5.500h-13z" fill="#0078d7"/>
<path d="M1649 494h-13l-6 5.500 6 5.500h13z" fill="#0078d7"/>
<path class="tk" d="M1590 493.500h4M1590 505.500h0M1590 518.500h4M1590 530.500h4M1590 542.500h4M1590 554.500h4M1590 567.500h4M1590 579.500h4M1590 591.500h4M1590 604.500h4M1590 616.500h4M1590 628.500h4M1590 641.500h4M1590 653.500h4M1590 665.500h4M1590 678.500h4M1590 690.500h4M1590 698.500h4M1624 493.500h4M1624 518.500h4M1624 530.500h4M1624 542.500h4M1624 554.500h4M1624 567.500h4M1624 579.500h4M1624 591.500h4M1624 604.500h4M1624 616.500h4M1624 628.500h4M1624 641.500h4M1624 653.500h4M1624 665.500h4M1624 678.500h4M1624 690.500h4M1624 698.500h4"/>
<g><text x="1608" y="496" class="m">0</text><text x="1608" y="521" class="m">12</text><text x="1608" y="545" class="m">24</text><text x="1608" y="570" class="m">36</text><text x="1608" y="594" class="m">48</text><text x="1608" y="619" class="m">60</text><text x="1608" y="644" class="m">72</text><text x="1608" y="668" class="m">84</text><text x="1608" y="693" class="m">96</text></g>
<rect x="1577.500" y="717.500" width="12" height="12" fill="#e8e8e8" stroke="#333"/><path d="M1579.500 723.500l3 3 5-6" fill="none" stroke="#777" stroke-width="1.300"/>
<text x="1593" y="728">Linked</text>
<!-- Macro -->
<path class="sg" d="M1892 246.500H1685.500V568.500H1892"/>
<rect x="1692" y="240" width="38" height="14" fill="#f0f0f0"/>
<text x="1694" y="250">Macro</text>
<path d="M1704 259h4v4h4v4h-4v4h-4v-4h-4v-4h4z" fill="#12c412" stroke="#0a550a" stroke-width=".6"/>
<rect x="1723" y="263" width="12" height="4" fill="#d80000" stroke="#700" stroke-width=".6"/>
<path d="M1743.500 256v18" stroke="#aaa"/>
<path d="M1754.500 257.500h4l2 3v6h-6zM1758.500 262.500h4l2 3v6.500h-6v-6z" fill="#fff" stroke="#444"/>
<rect x="1693.500" y="279.500" width="190" height="281" fill="#fff" stroke="#808090"/>
<path d="M1763.500 280v25M1831.500 280v25" stroke="#e4e4e4"/>
<text x="1701" y="297">Frequency</text><text x="1772" y="297">Level (-dB)</text><text x="1842" y="297">Phs D</text>
<rect x="1699" y="305" width="183" height="17" fill="#f0f0f0"/>
<text x="1701" y="318">1046,5</text><text x="1798" y="318" class="m">3,0</text><text x="1843" y="318">180,0</text>
<!-- Phase -->
<path class="sg" d="M1892 578.500H1685.500V741.500H1892"/>
<rect x="1692" y="572" width="38" height="14" fill="#f0f0f0"/>
<text x="1694" y="583">Phase</text>
<text x="1694" y="602">Difference</text>
<rect x="1697.500" y="623.500" width="182" height="3" fill="#e6e6e6" stroke="#d4d4d4"/>
<path class="tk" d="M1702.500 610v4M1745.500 610v4M1788.500 610v4M1831.500 610v4M1874.500 610v4M1702.500 636v4M1745.500 636v4M1788.500 636v4M1831.500 636v4M1874.500 636v4"/>
<rect x="1869" y="615" width="10" height="19" fill="#0078d7"/>
<text x="1789" y="658" class="m">180°</text>
<text x="1694" y="676">Offset</text>
<path d="M1693.500 719v-40h191" fill="none" stroke="#a0a0a0"/><path d="M1693.500 719.500h191V679" fill="none" stroke="#fff"/><path d="M1789.500 679v40" stroke="#a0a0a0"/>
<!-- footer -->
<rect class="cb" x="1553.500" y="758.500" width="12" height="12"/><text x="1570" y="769">Uptime</text>
<text x="1660" y="769" style="font-weight:bold" textLength="29">Web:</text>
<text x="1696" y="769" style="fill:#000080">http://e-cat.nm.ru/sinegen</text>
<text x="1660" y="787" style="font-weight:bold" textLength="59">Feedback:</text>
<text x="1726" y="787" style="fill:#000080" textLength="103">madsome@gmail.com</text>
</svg>
</body></html>
